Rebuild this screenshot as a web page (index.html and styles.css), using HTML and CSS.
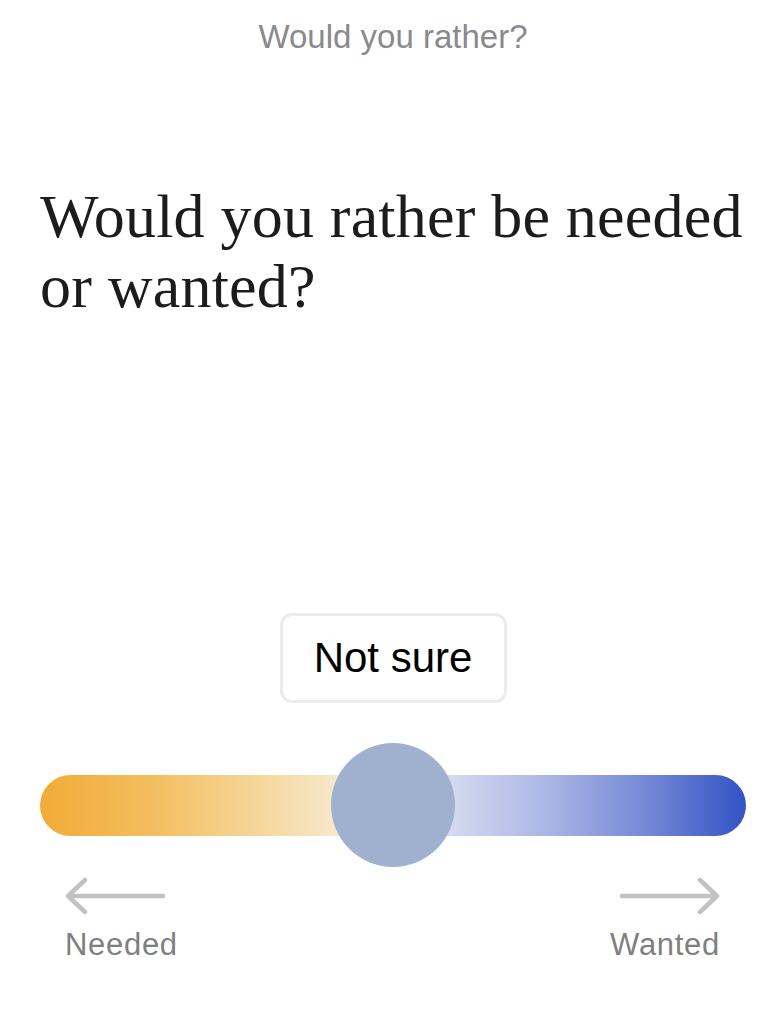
FILE: index.html
```html
<!DOCTYPE html>
<html lang="en">
<head>
    <meta charset="UTF-8">
    <meta name="viewport" content="width=device-width, initial-scale=1.0">
    <title>Would you rather?</title>
    <link rel="stylesheet" href="styles.css">
</head>
<body>
    <div class="topbar">Would you rather?</div>

    <h1 class="question">Would you rather be needed or wanted?</h1>

    <div class="answer">
        <button class="not-sure">Not sure</button>
    </div>

    <div class="slider">
        <div class="track"></div>
        <div class="knob"></div>
    </div>

    <div class="ends">
        <div class="end end-left">
            <svg class="arrow" width="100" height="44" viewBox="0 0 100 44">
                <path d="M98 19 H3 M20 3 L3 19 L20 35" fill="none" stroke="#c2c2c2" stroke-width="4.5" stroke-linecap="round" stroke-linejoin="round"/>
            </svg>
            <span>Needed</span>
        </div>
        <div class="end end-right">
            <svg class="arrow" width="100" height="44" viewBox="0 0 100 44">
                <path d="M2 19 H97 M80 3 L97 19 L80 35" fill="none" stroke="#c2c2c2" stroke-width="4.5" stroke-linecap="round" stroke-linejoin="round"/>
            </svg>
            <span>Wanted</span>
        </div>
    </div>
</body>
</html>
```

FILE: styles.css
```css
body {
    margin: 0;
    padding: 0 36px 0 40px;
    background: #fff;
    font-family: "Liberation Sans", Arial, sans-serif;
}
.topbar {
    padding-top: 17px;
    height: 40px;
    line-height: 40px;
    font-size: 33px;
    color: #8a8a8e;
    text-align: center;
}
.question {
    margin: 124px 0 0;
    font-family: "Liberation Serif", "Times New Roman", serif;
    font-weight: normal;
    font-size: 62px;
    line-height: 70px;
    letter-spacing: 0.2px;
    color: #1c1c1c;
}
.answer {
    display: flex;
    justify-content: center;
    margin-top: 292px;
}
.not-sure {
    width: 227px;
    height: 90px;
    border: 3px solid #ececec;
    border-radius: 12px;
    background: #fff;
    font-family: "Liberation Sans", Arial, sans-serif;
    font-size: 42px;
    color: #000;
}
.slider {
    position: relative;
    margin-top: 40px;
    height: 124px;
    display: flex;
    align-items: center;
}
.track {
    flex: 1;
    height: 61px;
    border-radius: 31px;
    background: linear-gradient(90deg, #f2ab38 0%, #f3bc5c 15%, #f5d597 30%, #f7e8cb 42%, #fbf6ee 50%, #d5daf0 58%, #a9b5e4 72%, #7488d6 86%, #3353c6 100%);
}
.knob {
    position: absolute;
    left: 50%;
    top: 0;
    width: 124px;
    height: 124px;
    margin-left: -62px;
    border-radius: 50%;
    background: #a0b1cf;
}
.ends {
    display: flex;
    justify-content: space-between;
    padding: 10px 26px 0 25px;
}
.end {
    display: flex;
    flex-direction: column;
}
.end-left { align-items: flex-start; }
.end-right { align-items: flex-end; }
.end span {
    margin-top: 6px;
    font-size: 31px;
    letter-spacing: 0.7px;
    color: #7f7f7f;
}
```
